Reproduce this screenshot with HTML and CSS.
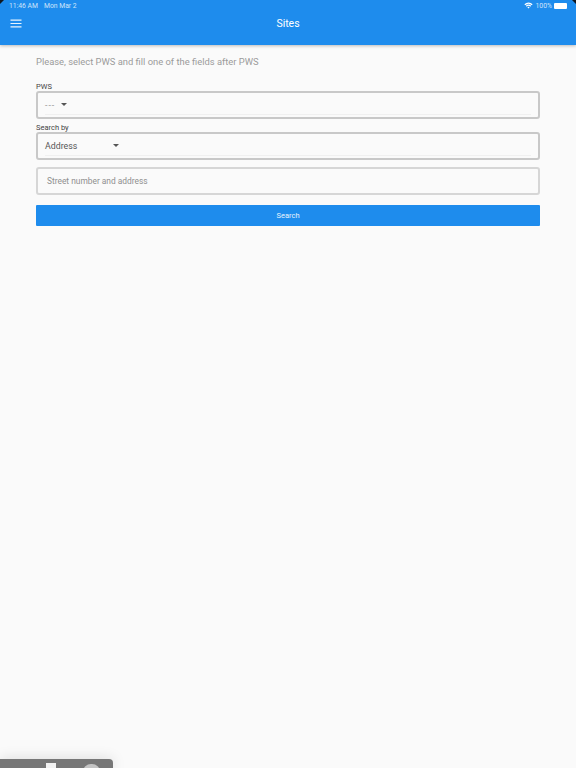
FILE: index.html
```html
<!DOCTYPE html>
<html>
    <head>
        <meta charset="utf-8">
        <title>Sites</title>
        <link rel="stylesheet" href="styles.css">
    </head>
    <body>
        <div class="corner cornerLeft"></div>
        <div class="corner cornerRight"></div>
        <div id="header">
            <div id="statusBar">
                <div class="statusGroup">
                    <span>11:46 AM</span>
                    <span>Mon Mar 2</span>
                </div>
                <div class="statusGroup statusRight">
                    <svg class="wifi" width="9" height="7" viewBox="0 0 10 8">
                        <path d="M0.3 2.6 A6.8 6.8 0 0 1 9.7 2.6 L8.7 3.6 A5.4 5.4 0 0 0 1.3 3.6 Z M2 4.3 A4.4 4.4 0 0 1 8 4.3 L7 5.3 A3 3 0 0 0 3 5.3 Z M3.7 6 A1.9 1.9 0 0 1 6.3 6 L5 7.4 Z" fill="#fff"/>
                    </svg>
                    <span>100%</span>
                    <div class="battery"></div>
                </div>
            </div>
            <div id="toolbar">
                <svg class="menu" width="12" height="9" viewBox="0 0 12 9">
                    <path d="M0.5 0.5 H11.5 V1.7 H0.5 Z M0.5 3.9 H11.5 V5.1 H0.5 Z M0.5 7.3 H11.5 V8.5 H0.5 Z" fill="#fff" fill-opacity="0.9"/>
                </svg>
                <h1>Sites</h1>
            </div>
        </div>
        <div id="content">
            <p id="descr">Please, select PWS and fill one of the fields after PWS</p>
            <label class="fieldLabel labelFirst">PWS</label>
            <div class="selectBox">
                <div class="selectValue">
                    <span class="valueEmpty">---</span>
                    <span class="arrow"></span>
                </div>
            </div>
            <label class="fieldLabel">Search by</label>
            <div class="selectBox">
                <div class="selectValue">
                    <span class="valueWide">Address</span>
                    <span class="arrow"></span>
                </div>
            </div>
            <div class="inputBox">Street number and address</div>
            <button id="searchButton">Search</button>
        </div>
        <div id="dock">
            <div class="dockIcon"></div>
            <div class="dockIcon dockRound"></div>
        </div>
    </body>
</html>
```

FILE: styles.css
```css
html, body { height: 100%; }
body {
    margin: 0;
    background-color: #fafafa;
    font-family: "Roboto", "Liberation Sans", sans-serif;
    overflow: hidden;
}

#header {
    height: 45px;
    background-color: #1e8ced;
    box-shadow: 0 1px 3px rgba(0, 0, 0, 0.25);
    color: white;
}

#statusBar {
    height: 11px;
    display: flex;
    justify-content: space-between;
    align-items: center;
    padding: 0 9px;
    font-size: 6.8px;
    color: #cfe5fa;
}
.statusGroup {
    display: flex;
    align-items: center;
    gap: 6px;
}
.statusRight { gap: 2px; }
.wifi { margin-right: 1px; }
.battery {
    width: 13px;
    height: 6px;
    background-color: white;
    border-radius: 1px;
}

#toolbar {
    height: 24px;
    position: relative;
    display: flex;
    align-items: center;
    justify-content: center;
}
.menu {
    position: absolute;
    left: 10px;
    top: 8px;
}
h1 {
    margin: 0;
    font-size: 10.5px;
    font-weight: 400;
}

.corner {
    position: absolute;
    top: 0;
    width: 0;
    height: 0;
    border-top: 4px solid #10171f;
    z-index: 2;
}
.cornerLeft { left: 0; border-right: 4px solid transparent; }
.cornerRight { right: 0; border-left: 4px solid transparent; }

#content {
    padding: 0 36px;
    display: flex;
    flex-direction: column;
}
#descr {
    margin: 11px 0 0 0;
    font-size: 9.4px;
    line-height: 12px;
    color: #9b9b9b;
}
.fieldLabel {
    font-size: 7.5px;
    line-height: 9px;
    height: 9px;
    margin-top: 4px;
    color: #444;
}
.labelFirst { margin-top: 14px; }

.selectBox {
    height: 28px;
    box-sizing: border-box;
    border: 2px solid #c8c8c8;
    border-radius: 3px;
    padding: 0 7px;
}
.selectValue {
    height: 22px;
    box-sizing: border-box;
    border-bottom: 1px solid #f0f0f0;
    display: flex;
    align-items: center;
    font-size: 8.8px;
    color: #555;
    padding-top: 2px;
}
.valueEmpty { width: 16px; color: #999; letter-spacing: 1px; }
.valueWide { width: 68px; }
.arrow {
    width: 0;
    height: 0;
    border-left: 3px solid transparent;
    border-right: 3px solid transparent;
    border-top: 3px solid #555;
}

.inputBox {
    height: 28px;
    box-sizing: border-box;
    margin-top: 7px;
    border: 2px solid #d6d6d6;
    border-radius: 3px;
    padding-left: 9px;
    display: flex;
    align-items: center;
    font-size: 8.4px;
    color: #8f8f8f;
}

#searchButton {
    height: 21px;
    margin-top: 10px;
    border: none;
    border-radius: 1px;
    background-color: #1e8ced;
    color: #e8f3fd;
    font-family: inherit;
    font-size: 7.5px;
    font-weight: 400;
}

#dock {
    position: absolute;
    left: 0;
    bottom: 0;
    width: 113px;
    height: 9px;
    background-color: #777;
    border-radius: 0 4px 0 0;
    box-shadow: 0 0 14px rgba(0, 0, 0, 0.15);
    overflow: hidden;
}
.dockIcon {
    position: absolute;
    left: 46px;
    top: 4px;
    width: 10px;
    height: 8px;
    background-color: #f2f2f2;
}
.dockRound {
    left: 83px;
    width: 17px;
    top: 5px;
    border-radius: 8px 8px 0 0;
    background-color: #c4c4c4;
}
```
